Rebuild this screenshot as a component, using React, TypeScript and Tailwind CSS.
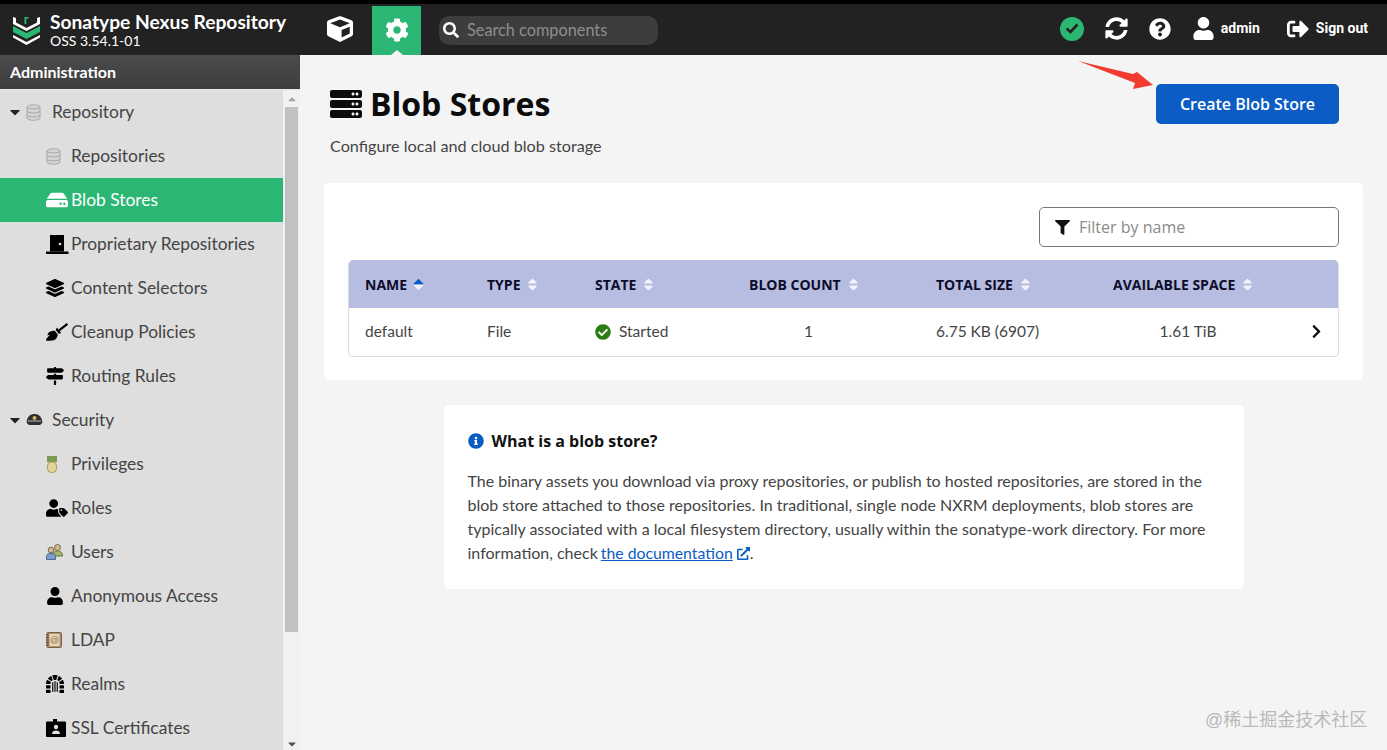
import type { ReactNode } from "react";
import {
  FaBroom,
  FaCaretDown,
  FaCaretUp,
  FaCheckCircle,
  FaChevronRight,
  FaCog,
  FaCube,
  FaDungeon,
  FaExternalLinkAlt,
  FaFilter,
  FaHdd,
  FaInfoCircle,
  FaLayerGroup,
  FaMapSigns,
  FaQuestionCircle,
  FaSearch,
  FaServer,
  FaSignOutAlt,
  FaSort,
  FaSyncAlt,
  FaUser,
  FaUserTag,
} from "react-icons/fa";

const DbIcon = () => (
  <svg width="15" height="17" viewBox="0 0 15 17">
    <path d="M1 3c0-3 13-3 13 0v11c0 3-13 3-13 0z" fill="#d4d4d4" stroke="#a8a8a8" />
    <path d="M1 3c0 2.500 13 2.500 13 0M1 7c0 2.500 13 2.500 13 0M1 11c0 2.500 13 2.500 13 0" fill="none" stroke="#a8a8a8" />
  </svg>
);

const HatIcon = () => (
  <svg width="17" height="13" viewBox="0 0 17 13">
    <path d="M1 6c1-4 4-6 7.500-6S15 2 16 6c1 2 0 4-2 5H3C1 10 0 8 1 6z" fill="#2f2f2f" />
    <rect x="2" y="6" width="13" height="2" fill="#777" />
    <circle cx="8.500" cy="4" r="2" fill="#c9b970" />
  </svg>
);

const MedalIcon = () => (
  <svg width="12" height="17" viewBox="0 0 12 17">
    <rect x="1" y="0" width="10" height="6" fill="#7d9a52" />
    <rect x="1.500" y="6" width="9" height="10.500" rx="4" fill="#e2d79a" stroke="#a89a5a" />
  </svg>
);

const UsersIcon = () => (
  <svg width="17" height="16" viewBox="0 0 17 16">
    <circle cx="11.500" cy="3.500" r="3" fill="#d8b98c" stroke="#6b6b50" />
    <path d="M7 12c0-4 2-5 4.500-5s5 1 5 5z" fill="#a5b56f" stroke="#66703f" />
    <circle cx="5" cy="6" r="2.800" fill="#d8b98c" stroke="#6b6b50" />
    <path d="M0.500 15.500v-3c0-2.500 2-3 4.500-3s4.500 0.500 4.500 3v3z" fill="#7e9bc9" stroke="#4e6a99" />
  </svg>
);

const BookIcon = () => (
  <svg width="16" height="16" viewBox="0 0 16 16">
    <rect x="1" y="0.500" width="14.500" height="15" rx="1" fill="#b08f67" stroke="#7b6142" />
    <rect x="3.500" y="2" width="10" height="12" fill="#e6d6bd" />
    <text x="8.500" y="11" fontSize="9" fontFamily="Liberation Sans, sans-serif" textAnchor="middle" fill="#8a6d49">
      @
    </text>
    <path d="M0 3h3M0 5.500h3M0 8h3M0 10.500h3M0 13h3" stroke="#5c4a33" />
  </svg>
);

const DoorIcon = () => (
  <svg width="23" height="19" viewBox="0 0 23 19">
    <path d="M4 0h14v16.500H4z" fill="#000" />
    <path d="M0 16.500h22.500V19H0z" fill="#000" />
    <circle cx="14" cy="9" r="1.300" fill="#dedede" />
  </svg>
);

const BadgeIcon = () => (
  <svg width="20" height="18" viewBox="0 0 20 18">
    <path d="M1 2.500h6V0h4v2.500h8a1 1 0 0 1 1 1V17a1 1 0 0 1-1 1H1a1 1 0 0 1-1-1V3.500a1 1 0 0 1 1-1z" fill="#000" />
    <circle cx="10" cy="8" r="2.200" fill="#dedede" />
    <path d="M6 15c0-2.500 1.500-3.500 4-3.500s4 1 4 3.500z" fill="#dedede" />
  </svg>
);

const Logo = () => (
  <svg width="29" height="31" viewBox="0 0 29 31" className="mr-[9px]">
    <path d="M1 3v7l13.500 7L28 10V3l-3 1v4.500L14.500 14 4 8.500V4z" fill="#fff" />
    <path d="M1 12l13.500 7L28 12v6l-13.500 7L1 18z" fill="#2cb674" />
    <path d="M1 21l13.500 7L28 21v2.500L14.500 31 1 23.500z" fill="#fff" />
    <path d="M12.500 10V3h4v1.500h-2.200V10z" fill="#2cb674" />
  </svg>
);

const tree: { label: string; icon: ReactNode; parent?: boolean; active?: boolean }[] = [
  { label: "Repository", icon: <DbIcon />, parent: true },
  { label: "Repositories", icon: <DbIcon /> },
  { label: "Blob Stores", icon: <FaHdd size={22} /> },
  { label: "Proprietary Repositories", icon: <DoorIcon /> },
  { label: "Content Selectors", icon: <FaLayerGroup size={18} /> },
  { label: "Cleanup Policies", icon: <FaBroom size={22} /> },
  { label: "Routing Rules", icon: <FaMapSigns size={18} /> },
  { label: "Security", icon: <HatIcon />, parent: true },
  { label: "Privileges", icon: <MedalIcon /> },
  { label: "Roles", icon: <FaUserTag size={22} /> },
  { label: "Users", icon: <UsersIcon /> },
  { label: "Anonymous Access", icon: <FaUser size={18} /> },
  { label: "LDAP", icon: <BookIcon /> },
  { label: "Realms", icon: <FaDungeon size={18} /> },
  { label: "SSL Certificates", icon: <BadgeIcon /> },
];

function TreeRow({ label, icon, parent }: (typeof tree)[number]) {
  const active = label === "Blob Stores";
  return (
    <div
      className={`flex h-11 shrink-0 items-center text-[17.4px] ${
        active ? "bg-[#2cb674] text-white" : "text-[#444444]"
      } ${parent ? "pl-[8px]" : "pl-[46px]"}`}
    >
      {parent && <FaCaretDown size={16} className="mr-[3px] -ml-[1px] text-[#222]" />}
      <span
        className={`flex items-center ${parent ? "w-[26px]" : "w-[25px]"} ${active ? "text-white" : "text-black"}`}
      >
        {icon}
      </span>
      {label}
    </div>
  );
}

function HeaderCell({ label, sorted, className }: { label: string; sorted?: boolean; className?: string }) {
  return (
    <div className={`flex items-center gap-[5px] ${className ?? ""}`}>
      {label}
      {sorted ? (
        <span className="relative h-[14px] w-[12px]">
          <FaCaretUp size={17} className="absolute -top-[4px] -left-[2px] text-[#0b5cc4]" />
          <FaCaretDown size={17} className="absolute top-[1px] -left-[2px] text-[#f2f3fa]" />
        </span>
      ) : (
        <FaSort size={15} className="text-[#f2f3fa]" />
      )}
    </div>
  );
}

export default function App() {
  return (
    <div className="relative flex h-[750px] w-[1387px] flex-col overflow-hidden bg-[#f4f4f4] font-['Lato',sans-serif]">
      <header className="flex h-[55px] shrink-0 items-stretch border-t-[4px] border-black bg-[#222222] text-white">
        <div className="flex w-[327px] shrink-0 items-center pl-3">
          <Logo />
          <div className="leading-none">
            <div className="text-[19.2px] font-bold leading-[22px]">Sonatype Nexus Repository</div>
            <div className="text-[14px] leading-[16px]">OSS 3.54.1-01</div>
          </div>
        </div>
        <div className="flex w-[45px] items-center pb-[2px]">
          <FaCube size={26} />
        </div>
        <div className="relative mt-[2px] flex w-[49px] items-center justify-center bg-[#2cb674] pb-[1px]">
          <FaCog size={24} />
          <span className="absolute bottom-0 left-[19px] border-x-[6px] border-b-[5px] border-x-transparent border-b-[#f4f4f4]" />
        </div>
        <div className="ml-[18px] mt-[12px] flex h-[29px] w-[219px] items-center rounded-[10px] bg-[#3d3d3d] pb-[1px] pl-[4px] text-[16.300px] text-[#8d8d8d]">
          <FaSearch size={16} className="mr-[8px] text-white" />
          Search components
        </div>
        <div className="ml-auto flex items-center pr-[19px] pb-[2px] font-['Roboto',sans-serif] text-[14px] font-bold">
          <span className="relative flex h-[24px] w-[24px] items-center justify-center rounded-full bg-[#2cb674]">
            <svg width="14" height="11" viewBox="0 0 14 11">
              <path d="M1.500 5.500l4 3.500 7-7.500" fill="none" stroke="#222" strokeWidth="2.600" />
            </svg>
          </span>
          <FaSyncAlt size={23} className="ml-[21px]" />
          <FaQuestionCircle size={22} className="ml-[21px]" />
          <FaUser size={23} className="ml-[21px]" />
          <span className="ml-[6px]">admin</span>
          <FaSignOutAlt size={22} className="ml-[27px]" />
          <span className="ml-[7px]">Sign out</span>
        </div>
      </header>

      <div className="flex min-h-0 flex-1">
        <aside className="flex w-[300px] shrink-0 flex-col">
          <div className="flex h-[35px] shrink-0 items-center border-b border-[#e8e8e8] bg-gradient-to-b from-[#4b4b4b] to-[#3e3e3e] pl-[10px] text-[16px] font-bold text-white">
            Administration
          </div>
          <div className="flex min-h-0 flex-1">
            <div className="flex w-[283px] flex-col overflow-hidden bg-[#dedede]">
              {tree.map((item) => (
                <TreeRow key={item.label} {...item} />
              ))}
            </div>
            <div className="relative flex w-[17px] flex-col items-center bg-[#f1f1f1]">
              <FaCaretUp size={12} className="mt-[3px] text-[#a3a3a3]" />
              <div className="mt-[2px] h-[525px] w-[13px] bg-[#c1c1c1]" />
              <FaCaretDown size={12} className="mt-auto mb-0 text-[#505050]" />
            </div>
          </div>
        </aside>

        <main className="min-w-0 flex-1 px-6 text-[#444444]">
          <div className="mt-[29px] flex h-10 items-center justify-between pr-6 pl-[6px]">
            <h1 className="flex items-center gap-2 font-['Open_Sans',sans-serif] text-[32px] font-bold text-[#0c0c0d]">
              <FaServer size={32} />
              Blob Stores
            </h1>
            <button className="h-10 w-[183px] rounded-[5px] bg-[#0b5cc4] font-['Open_Sans',sans-serif] text-[16px] font-semibold text-white">
              Create Blob Store
            </button>
          </div>
          <p className="mt-3 pl-[6px] text-[16.200px] leading-5">Configure local and cloud blob storage</p>

          <section className="mt-[27px] h-[197px] rounded-[5px] bg-white p-6">
            <div className="flex justify-end">
              <div className="flex h-10 w-[300px] items-center rounded-[5px] border border-[#777] pl-[15px] font-['Open_Sans',sans-serif] text-[16px] text-[#8a8a8a]">
                <FaFilter size={15} className="mr-[9px] text-[#111]" />
                Filter by name
              </div>
            </div>
            <div className="mt-[13px] overflow-hidden rounded-[5px] border border-t-0 border-[#dcdcdc]">
              <div className="-mr-px grid h-12 grid-cols-[138px_108px_137px_187px_177px_177px_1fr] items-center bg-[#b6bde0] font-['Open_Sans',sans-serif] text-[14px] font-bold text-[#0c0c2a]">
                <HeaderCell label="NAME" sorted className="pl-4" />
                <HeaderCell label="TYPE" />
                <HeaderCell label="STATE" />
                <HeaderCell label="BLOB COUNT" className="pl-[17px]" />
                <HeaderCell label="TOTAL SIZE" className="pl-[17px]" />
                <HeaderCell label="AVAILABLE SPACE" className="pl-[17px]" />
              </div>
              <div className="grid h-12 grid-cols-[138px_108px_137px_187px_177px_177px_1fr] items-center pb-[1px] text-[15.500px]">
                <div className="pl-4">default</div>
                <div>File</div>
                <div className="flex items-center gap-2">
                  <FaCheckCircle size={16} className="text-[#2a7d14]" />
                  Started
                </div>
                <div className="pr-[52px] pl-[18px] text-center">1</div>
                <div className="pl-[17px]">6.75 KB (6907)</div>
                <div className="pr-[10px] pl-[17px] text-center">1.61 TiB</div>
                <div className="flex justify-end pr-[14px]">
                  <FaChevronRight size={15} className="text-[#111]" />
                </div>
              </div>
            </div>
          </section>

          <section className="mx-auto mt-[25px] h-[184px] w-[800px] rounded-[5px] bg-white px-6 pt-[26px]">
            <h2 className="flex items-center gap-2 font-['Open_Sans',sans-serif] text-[16px] font-bold leading-5 text-[#111]">
              <FaInfoCircle size={16} className="text-[#0b5cc4]" />
              What is a blob store?
            </h2>
            <p className="mt-[18px] text-[16px] leading-6">
              The binary assets you download via proxy repositories, or publish to hosted repositories, are stored in
              the blob store attached to those repositories. In traditional, single node NXRM deployments, blob stores
              are typically associated with a local filesystem directory, usually within the sonatype-work directory.
              For more
            </p>
            <div className="flex items-center text-[16px] leading-6">
              <span>information, check</span>
              <a className="ml-[3px] text-[15.800px] text-[#0b5cc4] underline">the documentation</a>
              <FaExternalLinkAlt size={13} className="ml-[4px] text-[#0b5cc4]" />
              <span>.</span>
            </div>
          </section>
        </main>
      </div>

      {/* red annotation arrow drawn over the page */}
      <svg width="80" height="32" viewBox="0 0 80 32" className="absolute top-[60px] left-[1077px]">
        <path d="M1 1L56 14 60 12 76 25 56 29 58 23z" fill="#f33a30" />
      </svg>
      <div className="absolute top-[707px] left-[1205px] font-['Liberation_Sans','Noto_Sans_CJK_SC',sans-serif] text-[18px] text-[#b9b9b9]">
        @稀土掘金技术社区
      </div>
    </div>
  );
}
